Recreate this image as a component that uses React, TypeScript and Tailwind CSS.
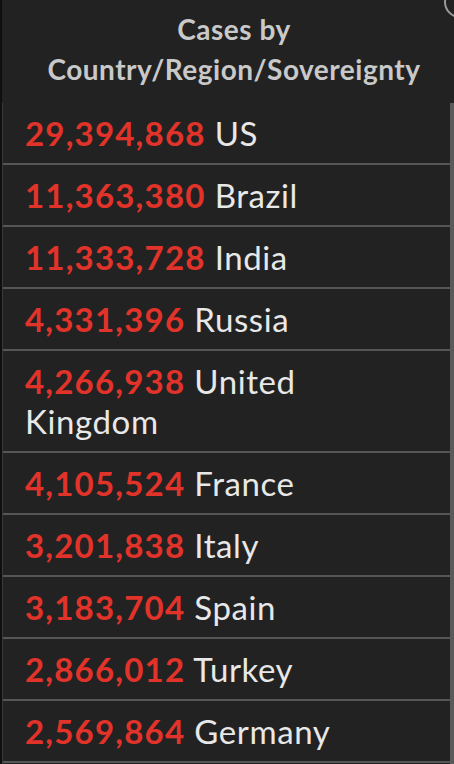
import React from "react";

const rows: [string, string][] = [
  ["29,394,868", "US"],
  ["11,363,380", "Brazil"],
  ["11,333,728", "India"],
  ["4,331,396", "Russia"],
  ["4,266,938", "United Kingdom"],
  ["4,105,524", "France"],
  ["3,201,838", "Italy"],
  ["3,183,704", "Spain"],
  ["2,866,012", "Turkey"],
  ["2,569,864", "Germany"],
];

export default function App() {
  return (
    <div
      className="relative flex h-[764px] w-[454px] overflow-hidden bg-[#222222]"
      style={{ fontFamily: "Lato, 'Open Sans', sans-serif" }}
    >
      <div className="w-[2px] shrink-0 bg-[#0f0f0f]" />
      <div className="flex min-w-0 flex-1 flex-col">
        <div className="flex h-[103px] shrink-0 flex-col items-center justify-center pb-[6px] pl-[12px] text-center text-[28px] font-bold leading-[40px] tracking-[0.5px] text-[#c9c9c9]">
          <div>Cases by</div>
          <div>Country/Region/Sovereignty</div>
        </div>
        <div className="flex min-h-0 flex-1">
          <div className="flex-1 border-l border-[#3a3a3a]">
            {rows.map(([n, c]) => (
              <div
                key={c}
                className="border-b-2 border-[#565656] pl-[22px] pr-[20px] py-[10px] text-[33px] leading-[40px] tracking-[0.6px] text-[#e8e8e8]"
              >
                <span className="font-bold tracking-[1.2px] text-[#e2332a]">{n}</span> {c}
              </div>
            ))}
          </div>
          <div className="w-[4px] shrink-0 bg-[#5a5a5a]" />
        </div>
      </div>
      <div className="absolute right-[-22px] top-[-14px] h-[32px] w-[32px] rounded-full border-2 border-[#9a9a9a]" />
    </div>
  );
}
